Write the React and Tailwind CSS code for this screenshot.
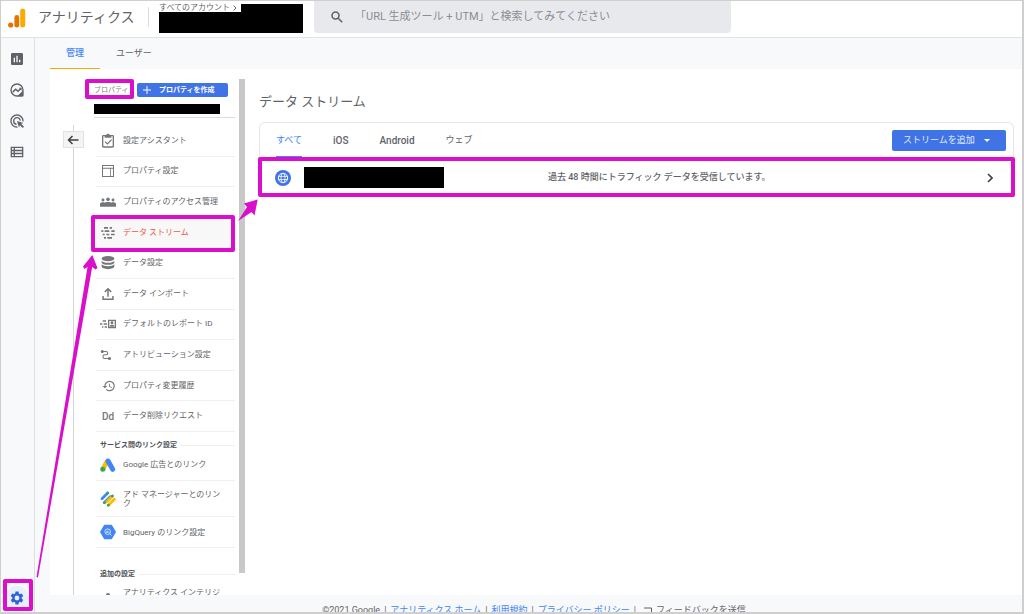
import React from "react";

const ink = "text-[#5f6368]";

function Logo() {
  return (
    <svg viewBox="0 0 18 20" className="h-5 w-[18px] shrink-0" aria-hidden="true">
      <rect x="12.2" y="0.4" width="5" height="19.2" rx="2.5" fill="#f9ab00" />
      <rect x="6.4" y="7" width="4.8" height="12.6" rx="2.4" fill="#e37400" />
      <circle cx="2.7" cy="17" r="2.6" fill="#e37400" />
    </svg>
  );
}

function Icon({ children, className = "h-4 w-4", box = "0 0 24 24" }) {
  return (
    <svg viewBox={box} className={className} fill="currentColor" aria-hidden="true">
      {children}
    </svg>
  );
}

const navIcons = [
  {
    label: "レポート",
    icon: (
      <Icon>
        <path d="M19 3H5a2 2 0 0 0-2 2v14c0 1.100.9 2 2 2h14a2 2 0 0 0 2-2V5a2 2 0 0 0-2-2zM9 17H7v-7h2v7zm4 0h-2V7h2v10zm4 0h-2v-4h2v4z" />
      </Icon>
    ),
  },
  {
    label: "探索",
    icon: (
      <Icon>
        <path d="M12 2a10 10 0 1 0 0 20h8a2 2 0 0 0 2-2v-8A10 10 0 0 0 12 2zm0 18a8 8 0 1 1 0-16 8 8 0 0 1 0 16z" />
        <path d="M5 14l5-4.500 3.500 3L16 9.800 14.500 8.500H19V13l-1.500-1.500-4 4-3.500-3-3.700 3.500z" />
        <path d="M20 14v6h-6z" />
      </Icon>
    ),
  },
  {
    label: "広告",
    icon: (
      <Icon>
        <path d="M11.710 17.990A5.993 5.993 0 0 1 6 12c0-3.310 2.690-6 6-6 3.220 0 5.840 2.530 5.990 5.710l-2.100-.630a3.999 3.999 0 1 0-4.810 4.810l.630 2.100zM22 12c0 .300-.010.600-.040.900l-1.970-.590c.010-.100.010-.210.010-.310 0-4.420-3.580-8-8-8s-8 3.580-8 8 3.580 8 8 8c.100 0 .210 0 .310-.010l.590 1.970c-.300.030-.600.040-.900.040-5.520 0-10-4.480-10-10S6.480 2 12 2s10 4.480 10 10zm-3.770 4.260L22 15l-10-3 3 10 1.260-3.770 4.270 4.270 1.980-1.980-4.280-4.260z" />
      </Icon>
    ),
  },
  {
    label: "設定",
    icon: (
      <Icon>
        <path d="M2.500 4v16h19V4h-19zm4.500 14H4.500v-2.500H7V18zm0-4.700H4.500v-2.600H7v2.600zm0-4.800H4.500V6H7v2.500zM19.500 18H9v-2.500h10.500V18zm0-4.700H9v-2.600h10.500v2.600zm0-4.800H9V6h10.500v2.500z" />
      </Icon>
    ),
  },
];

const items = [
  {
    label: "設定アシスタント",
    icon: (
      <Icon>
        <path d="M19 3h-4.200a3 3 0 0 0-5.600 0H5a2 2 0 0 0-2 2v15a2 2 0 0 0 2 2h14a2 2 0 0 0 2-2V5a2 2 0 0 0-2-2zm0 17H5V5h2v2h10V5h2v15zM16.800 9.300L11 15.100l-2.800-2.800-1.300 1.300L11 17.700l7.100-7.100z" />
      </Icon>
    ),
  },
  {
    label: "プロパティ設定",
    icon: (
      <Icon>
        <path d="M3 3v18h18V3H3zm16.500 16.500h-15v-11H15v11h1.200v-11h3.300v11zm0-12.500h-15V4.500h15V7z" />
      </Icon>
    ),
  },
  {
    label: "プロパティのアクセス管理",
    icon: (
      <Icon>
        <circle cx="4.500" cy="9" r="2.200" />
        <circle cx="12" cy="8" r="2.700" />
        <circle cx="19.500" cy="9" r="2.200" />
        <path d="M0 19v-4c0-1.500 2-2.500 4.500-2.500 1 0 2 .2 2.500.5C8 12.300 10 12 12 12s4 .3 5 1c.5-.3 1.500-.5 2.500-.5 2.500 0 4.500 1 4.500 2.500v4z" />
      </Icon>
    ),
  },
  {
    label: "データ ストリーム",
    active: true,
    icon: (
      <Icon>
        <path d="M6 3h6v2.500H6zM14.500 3H18v2.500h-3.500zM2 8h3v2.500H2zM7 8h7v2.500H7zM17 8h5v2.500h-5zM4 13h3v2.500H4zM9.500 13H14v2.500H9.500zM16.500 13H22v2.500h-5.500zM6 18h3v2.500H6zM11 18h7v2.500h-7z" />
      </Icon>
    ),
  },
  {
    label: "データ設定",
    icon: (
      <Icon>
        <ellipse cx="12" cy="5.500" rx="9.500" ry="4" />
        <path d="M2.500 8.500c1.500 2 5 3 9.500 3s8-1 9.500-3v2.700c0 2-4.300 3.600-9.500 3.600s-9.500-1.600-9.500-3.600zM2.500 14c1.500 2 5 3 9.500 3s8-1 9.500-3v3.400c0 2-4.300 3.800-9.500 3.800s-9.500-1.800-9.500-3.800z" />
      </Icon>
    ),
  },
  {
    label: "データ インポート",
    icon: (
      <Icon>
        <path d="M12 2.500L6.500 8 8 9.700l2.900-2.900V16h2.200V6.800L16 9.700 17.500 8zM3.500 15v6h17v-6h-2.200v3.800H5.700V15z" />
      </Icon>
    ),
  },
  {
    label: "デフォルトのレポート ID",
    icon: (
      <Icon>
        <path d="M4 6.500h5v2.200H4zM0 11h3.500v2.200H0zM5.500 11h5v2.200h-5zM3 15.500h2v2.200H3zM7 15.500h3.500v2.200H7z" />
        <path fillRule="evenodd" d="M12 5.500h12v13H12zm2 2v9h8v-9zm4 .5a2.200 2.200 0 1 1 0 4.400A2.200 2.200 0 0 1 18 8zm-3.500 8c0-2.300 1.500-3 3.500-3s3.500.7 3.500 3z" />
      </Icon>
    ),
  },
  {
    label: "アトリビューション設定",
    shift: "pr-1",
    icon: (
      <svg viewBox="0 0 24 24" className="h-4 w-4" fill="none" stroke="currentColor" strokeWidth="2.200" aria-hidden="true">
        <path d="M4 5h8a3.300 3.300 0 0 1 0 6.600H9.500a3.500 3.500 0 0 0 0 7.400h9" />
        <circle cx="4.500" cy="5" r="2" fill="currentColor" />
        <circle cx="19" cy="19" r="2" fill="currentColor" />
      </svg>
    ),
  },
  {
    label: "プロパティ変更履歴",
    shift: "pl-[2px]",
    icon: (
      <Icon className="h-[14px] w-[14px]">
        <path d="M13 3a9 9 0 0 0-9 9H1l3.890 3.890.070.140L9 12H6c0-3.870 3.130-7 7-7s7 3.130 7 7-3.130 7-7 7a6.980 6.980 0 0 1-4.940-2.060l-1.420 1.420A8.954 8.954 0 0 0 13 21a9 9 0 0 0 0-18zm-1 5v5l4.280 2.540.720-1.210-3.500-2.080V8H12z" />
      </Icon>
    ),
  },
  {
    label: "データ削除リクエスト",
    icon: <span className="text-[10px] font-medium">Dd</span>,
  },
];

function AdsIcon() {
  return (
    <svg viewBox="0 0 24 24" className="h-4 w-4" aria-hidden="true">
      <path d="M11 6L4 18.500" stroke="#fbbc04" strokeWidth="7" />
      <path d="M12 6l7 12.500" stroke="#4285f4" strokeWidth="7.500" strokeLinecap="round" />
      <circle cx="4.200" cy="18.500" r="3.800" fill="#34a853" />
    </svg>
  );
}

function AdManagerIcon() {
  return (
    <svg viewBox="0 0 24 24" className="h-4 w-4" fill="none" strokeWidth="4.200" strokeLinecap="round" aria-hidden="true">
      <path d="M3 11.500l8.500-8.500M7 17l8.500-8.500" stroke="#4285f4" />
      <path d="M10 16.500l8.500-8.500M13 21l8.500-8.500" stroke="#fbbc04" />
      <path d="M11.500 3l.1-.1M6.500 17.500l.1-.1M18.500 7.500l.1-.1M12.500 21.500l.1-.1" stroke="#34a853" />
    </svg>
  );
}

function BigQueryIcon() {
  return (
    <svg viewBox="0 0 24 24" className="h-4 w-4" aria-hidden="true">
      <path d="M7 2h10l6 10-6 10H7L1 12z" fill="#4285f4" stroke="#4285f4" strokeWidth="2" strokeLinejoin="round" />
      <circle cx="11.500" cy="11.500" r="4.200" fill="none" stroke="#dbe7fd" strokeWidth="1.400" />
      <path d="M14.500 14.500l3 3M9.700 11v2.200M11.500 9.800v3.600M13.300 11.500v1.600" stroke="#dbe7fd" strokeWidth="1.300" />
    </svg>
  );
}

function Highlight({ className }) {
  return (
    <span aria-hidden="true" className={`pointer-events-none absolute z-10 rounded-xs border-4 border-[#d90fc9] ${className}`} />
  );
}

function SectionTitle({ children, className }) {
  return (
    <h2 className={`flex items-center gap-1 pl-1 text-[7px] leading-3 font-bold text-[#4d5156] ${className}`}>
      {children}
      <span className="h-px flex-1 bg-[#efefef]" />
    </h2>
  );
}

function LinkRow({ icon, children, className }) {
  return (
    <li className={`border-b border-[#efefef] ${className}`}>
      <a href="#link" className="flex h-full items-center gap-[7px] pl-1">
        <span className="flex w-4 shrink-0 justify-center">{icon}</span>
        <span className="leading-[9px]">{children}</span>
      </a>
    </li>
  );
}

function PropertyColumn() {
  return (
    <div className="w-[141px] shrink-0 pt-[13px]">
      <div className="flex h-4 items-center gap-1">
        <span className="relative w-[39px] whitespace-nowrap text-[7px] leading-4 text-[#80868b]">
          プロパティ
          <Highlight className="-top-[3px] -left-[9px] h-5 w-[49px]" />
        </span>
        <button className="flex h-[14px] w-[91px] items-center gap-2 rounded-xs bg-[#3f73e6] pl-[6px] text-[7px] font-bold whitespace-nowrap text-white">
          <svg viewBox="0 0 8 8" className="h-2 w-2 shrink-0" stroke="currentColor" aria-hidden="true">
            <path d="M4 0v8M0 4h8" />
          </svg>
          プロパティを作成
        </button>
      </div>
      <div className="mt-[6px] h-[10px] w-[126px] bg-black" />
      <div className="mt-[3px] border-b border-[#dcdcdc]" />
      <ul className="mt-2 ml-[2px] grid h-[306px] auto-rows-fr text-[8px]">
        {items.map((item) => (
          <li key={item.label} className={`relative border-b border-[#efefef] ${item.active ? "bg-[#f8f8f8]" : ""}`}>
            <a href="#item" className={`flex h-full items-center gap-[7px] pl-1 ${item.active ? "text-[#e8594b]" : ""}`}>
              <span className={`flex w-4 shrink-0 justify-center text-[#74777a] ${item.shift || ""}`}>{item.icon}</span>
              <span className="whitespace-nowrap">{item.label}</span>
            </a>
            {item.active && <Highlight className="-top-[3px] -left-[5px] h-[37px] w-36" />}
          </li>
        ))}
      </ul>
      <SectionTitle className="mt-[7px] ml-[2px]">サービス間のリンク設定</SectionTitle>
      <ul className="ml-[2px] text-[8px]">
        <LinkRow icon={<AdsIcon />} className="h-[30px] pb-[2px]">Google 広告とのリンク</LinkRow>
        <LinkRow icon={<AdManagerIcon />} className="h-9 pr-2">アド マネージャーとのリンク</LinkRow>
        <LinkRow icon={<BigQueryIcon />} className="h-[31px]">BigQuery のリンク設定</LinkRow>
      </ul>
      <SectionTitle className="mt-5 ml-[2px]">追加の設定</SectionTitle>
      <div className="ml-[2px] flex gap-[7px] pt-[7px] pl-1 text-[8px] leading-3">
        <span className="flex w-4 shrink-0 justify-center pt-[6px]">
          <span className="h-2 w-1 rounded-full bg-[#74777a]" />
        </span>
        <a href="#insights" className="whitespace-nowrap">アナリティクス インテリジ</a>
      </div>
    </div>
  );
}

function Streams() {
  return (
    <section className="min-w-0 flex-1 pt-[23px] pr-2 pl-[14px]">
      <h1 className="text-[13px] leading-5">データ ストリーム</h1>
      <div className="mt-[10px] rounded-t-md border border-b-0 border-[#e6e6e6]">
        <div className="flex h-[35px] items-stretch pr-[7px] pl-4 text-[10px]">
          <button className="relative mr-[31px] text-[9px] text-[#4285f4]">
            すべて
            <span className="absolute inset-x-0 bottom-0 h-[2px] bg-[#4285f4]" />
          </button>
          <button className="mr-[31px] font-medium">iOS</button>
          <button className="mr-[31px] font-medium">Android</button>
          <button className="text-[9px]">ウェブ</button>
          <button className="mt-[7px] ml-auto flex h-[21px] w-[114px] items-center rounded-xs bg-[#3f73e6] pl-[11px] text-[9px] text-[#e3ebfc]">
            ストリームを追加
            <svg viewBox="0 0 6 3" className="ml-[9px] h-[3px] w-[6px]" fill="white" aria-hidden="true">
              <path d="M0 0h6L3 3z" />
            </svg>
          </button>
        </div>
        <div className="relative flex h-[39px] items-center pr-5 pl-[15px]">
          <Highlight className="-inset-x-[2px] -top-px bottom-0" />
          <svg viewBox="0 0 16 16" className="h-4 w-4 shrink-0" fill="none" stroke="white" aria-hidden="true">
            <circle cx="8" cy="8" r="8" fill="#3f73e6" stroke="none" />
            <circle cx="8" cy="8" r="4.700" />
            <ellipse cx="8" cy="8" rx="2" ry="4.700" strokeWidth="0.800" />
            <path d="M3.700 6.400h8.600M3.700 9.600h8.600" strokeWidth="0.800" />
          </svg>
          <div className="ml-[13px] h-[21px] w-[140px] bg-black" />
          <p className="ml-[104px] text-[9px] font-medium">過去 48 時間にトラフィック データを受信しています。</p>
          <svg viewBox="0 0 6 10" className="ml-auto h-[10px] w-[6px]" fill="none" stroke="#3c4043" strokeWidth="1.600" aria-hidden="true">
            <path d="M1 1l4 4-4 4" />
          </svg>
        </div>
      </div>
    </section>
  );
}

export default function App() {
  return (
    <div className={`relative flex h-screen flex-col overflow-hidden border border-r-2 border-b-2 border-[#cfcfcf] bg-[#f8f9fb] font-['Roboto','Noto_Sans_CJK_JP',sans-serif] ${ink}`}>
      <header className="flex h-[37px] shrink-0 items-start border-b border-[#e2e3e5] bg-white">
        <div className="flex h-[33px] items-center gap-3 pl-[7px]">
          <Logo />
          <span className="w-[110px] text-[14px] whitespace-nowrap">アナリティクス</span>
        </div>
        <div className="mt-[6px] h-5 w-px bg-[#dcdcdc]" />
        <div className="ml-[10px] w-36 pt-[2px]">
          <div className="flex h-[9px] items-center text-[8px] leading-[9px] whitespace-nowrap">
            すべてのアカウント
            <svg viewBox="0 0 4 6" className="ml-[3px] h-[6px] w-1" fill="none" stroke="currentColor" aria-hidden="true">
              <path d="M.5.5L3 3 .5 5.500" />
            </svg>
            <span className="ml-auto h-2 w-[62px] bg-black" />
          </div>
          <div className="h-[21px] bg-black" />
        </div>
        <label className="ml-[11px] flex h-8 w-[417px] items-center gap-3 rounded-b-sm bg-[#e8e9ed] pl-[17px]">
          <svg viewBox="0 0 12 12" className="h-3 w-3 shrink-0" fill="none" stroke="#5f6368" strokeWidth="1.600" aria-hidden="true">
            <circle cx="4.500" cy="4.500" r="3.500" />
            <path d="M7.200 7.200l4 4" />
          </svg>
          <input
            type="search"
            aria-label="検索"
            placeholder="「URL 生成ツール + UTM」と検索してみてください"
            className="w-full bg-transparent text-[11px] outline-none placeholder:text-[#8a8e93]"
          />
        </label>
      </header>

      <div className="flex min-h-0 flex-1">
        <nav className="flex w-[34px] shrink-0 flex-col items-center border-r border-[#dedfe1] pt-[13px] pr-[2px]">
          <div className="flex flex-col gap-[15px]">
            {navIcons.map((n) => (
              <a key={n.label} href="#nav" aria-label={n.label}>
                {n.icon}
              </a>
            ))}
          </div>
          <a href="#admin" aria-label="管理" className="relative mt-auto mb-[2px] flex h-6 w-6 items-center justify-center rounded-full bg-[#e8eefb] text-[#2f63d4]">
            <Icon>
              <path d="M19.140 12.940c.040-.300.060-.610.060-.940s-.020-.640-.070-.940l2.030-1.580a.49.490 0 0 0 .120-.610l-1.920-3.320a.488.488 0 0 0-.590-.220l-2.390.960a7.020 7.020 0 0 0-1.620-.940L14.400 2.810a.484.484 0 0 0-.480-.410h-3.840c-.240 0-.430.170-.470.410l-.360 2.540c-.590.240-1.130.570-1.620.940l-2.390-.960a.48.480 0 0 0-.590.220L2.740 8.870a.48.480 0 0 0 .120.610l2.030 1.580c-.050.300-.090.630-.090.940s.020.640.070.940l-2.030 1.580a.49.490 0 0 0-.120.610l1.920 3.320c.120.220.370.290.590.220l2.390-.960c.500.380 1.030.700 1.620.940l.360 2.540c.050.240.240.410.480.410h3.840c.240 0 .440-.170.470-.410l.360-2.540c.590-.240 1.130-.560 1.620-.940l2.390.960c.220.080.470 0 .590-.220l1.920-3.320a.48.480 0 0 0-.120-.610l-2.010-1.580zM12 15.600a3.600 3.600 0 1 1 0-7.200 3.600 3.600 0 0 1 0 7.200z" />
            </Icon>
            <Highlight className="-top-[7px] -right-1 -bottom-px -left-[2px]" />
          </a>
        </nav>

        <div className="flex min-w-0 flex-1 flex-col pl-[15px]">
          <div className="flex h-[31px] shrink-0 text-[9px]">
            <button className="relative w-[50px] font-medium text-[#4285f4]">
              管理
              <span className="absolute inset-x-0 bottom-0 h-px bg-[#f9ab00]" />
            </button>
            <button className="px-4">ユーザー</button>
          </div>
          <main className="flex min-h-0 flex-1 overflow-hidden bg-white">
            <div className="flex w-11 shrink-0 flex-col items-center pt-14 pl-[2px]">
              <span className="h-[6px] w-px bg-[#d6d6d6]" />
              <button aria-label="戻る" className="flex h-[17px] w-[21px] items-center justify-center border border-[#e2e2e2] bg-[#f4f4f4]">
                <svg viewBox="0 0 12 10" className="h-[10px] w-3" fill="none" stroke="#3c4043" strokeWidth="1.500" aria-hidden="true">
                  <path d="M11.500 5H1.500M5.500 1l-4 4 4 4" />
                </svg>
              </button>
              <span className="w-px flex-1 bg-[#d6d6d6]" />
            </div>
            <PropertyColumn />
            <div className="mt-[10px] ml-1 h-[494px] w-[6px] shrink-0 bg-[#c8c8c8]" />
            <Streams />
          </main>
          <footer className="flex h-[17px] shrink-0 justify-center gap-1 overflow-hidden pt-2 pr-1 text-[9px] leading-[14px] whitespace-nowrap">
            <span>©2021 Google</span>|<a href="#home" className="text-[#4285f4]">アナリティクス ホーム</a>|
            <a href="#terms" className="text-[#4285f4]">利用規約</a>|
            <a href="#privacy" className="text-[#4285f4]">プライバシー ポリシー</a>|
            <button className="ml-1 flex gap-1">
              <svg viewBox="0 0 8 10" className="mt-1 h-[10px] w-2" fill="none" stroke="currentColor" aria-hidden="true">
                <path d="M0 1h7.500v8" />
              </svg>
              フィードバックを送信
            </button>
          </footer>
        </div>
      </div>

      <svg viewBox="0 0 270 600" className="pointer-events-none absolute top-0 left-0 z-20 h-[600px] w-[270px]" fill="#d90fc9" aria-hidden="true">
        <path d="M35.500 576L86.500 266l-3 2-1.500-2.500L91.300 254l5.200 13-2 1.500-3.300-2.500L37 576.500z" />
        <path d="M237 220l9-14-3-3.500L256.700 198.500 253.500 214.500l-3-3.500z" />
      </svg>
    </div>
  );
}
